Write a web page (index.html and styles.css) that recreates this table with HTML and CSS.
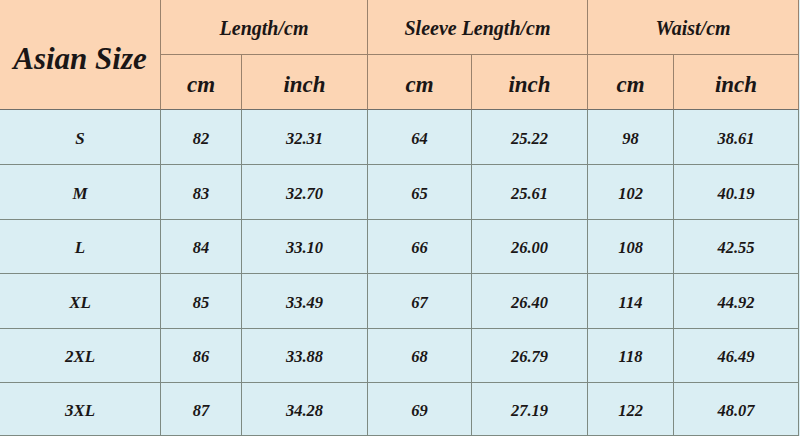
FILE: index.html
```html
<!DOCTYPE html>
<html>
<head>
<meta charset="utf-8">
<link rel="stylesheet" href="styles.css">
</head>
<body>
<div class="chart">
  <div class="cell head corner">Asian Size</div>
  <div class="cell head group span2">Length/cm</div>
  <div class="cell head group span2">Sleeve Length/cm</div>
  <div class="cell head group span2">Waist/cm</div>
  <div class="cell head unit">cm</div>
  <div class="cell head unit">inch</div>
  <div class="cell head unit">cm</div>
  <div class="cell head unit">inch</div>
  <div class="cell head unit">cm</div>
  <div class="cell head unit">inch</div>

  <div class="cell first">S</div><div class="cell">82</div><div class="cell">32.31</div><div class="cell">64</div><div class="cell">25.22</div><div class="cell">98</div><div class="cell">38.61</div>
  <div class="cell first">M</div><div class="cell">83</div><div class="cell">32.70</div><div class="cell">65</div><div class="cell">25.61</div><div class="cell">102</div><div class="cell">40.19</div>
  <div class="cell first">L</div><div class="cell">84</div><div class="cell">33.10</div><div class="cell">66</div><div class="cell">26.00</div><div class="cell">108</div><div class="cell">42.55</div>
  <div class="cell first">XL</div><div class="cell">85</div><div class="cell">33.49</div><div class="cell">67</div><div class="cell">26.40</div><div class="cell">114</div><div class="cell">44.92</div>
  <div class="cell first">2XL</div><div class="cell">86</div><div class="cell">33.88</div><div class="cell">68</div><div class="cell">26.79</div><div class="cell">118</div><div class="cell">46.49</div>
  <div class="cell first">3XL</div><div class="cell">87</div><div class="cell">34.28</div><div class="cell">69</div><div class="cell">27.19</div><div class="cell">122</div><div class="cell">48.07</div>
</div>
</body>
</html>
```

FILE: styles.css
```css
html, body {
  margin: 0;
  padding: 0;
  background: #ffffff;
}
body {
  width: 800px;
  height: 437px;
  overflow: hidden;
}
.chart {
  display: grid;
  grid-template-columns: 161px 81px 126px 104px 116px 86px 125px;
  grid-template-rows: 55px 55px 55px 55px 54px 55px 54px 53px;
  font-family: "Liberation Serif", "Times New Roman", serif;
  font-style: italic;
  font-weight: bold;
  color: #1a1616;
  background: #daeef3;
}
.cell {
  box-sizing: border-box;
  display: flex;
  align-items: center;
  justify-content: center;
  padding-top: 3px;
  border-right: 1px solid #7e8a82;
  border-bottom: 1px solid #7e8a82;
  font-size: 16.5px;
  background: #daeef3;
}
.head {
  background: #fcd5b4;
  border-right-color: #9a826c;
  border-bottom-color: #9a826c;
}
.corner {
  grid-row: span 2;
  font-size: 31px;
  padding-top: 8px;
  border-bottom-color: #6f6f6b;
}
.span2 {
  grid-column: span 2;
}
.group {
  font-size: 20px;
  padding-top: 3px;
}
.unit {
  font-size: 23px;
  padding-top: 6px;
  border-bottom-color: #6f6f6b;
}
.first {
  font-size: 17px;
}
```
